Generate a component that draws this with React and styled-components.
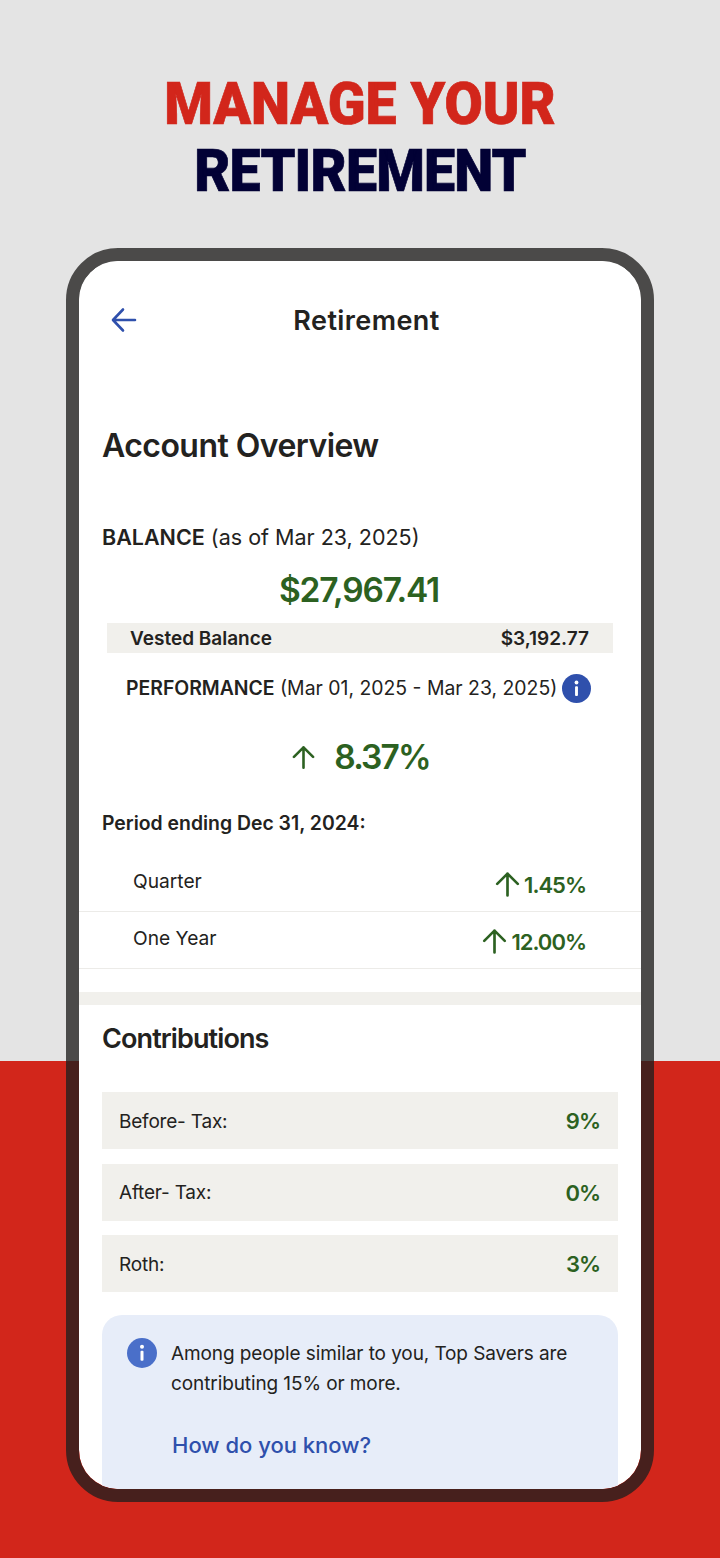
import React from 'react'
import styled, { createGlobalStyle } from 'styled-components'

const Global = createGlobalStyle`
    html, body {
        margin : 0;
        padding : 0;
    }
    body {
        font-family : "Inter", "Liberation Sans", sans-serif;
        color : #232220;
    }
`
const Stage = styled.div`
    width : 720px;
    height : 1558px;
    overflow : hidden;
    background : linear-gradient(to bottom, #e4e4e4 0, #e4e4e4 1061px, #d2261b 1061px);
    padding-top : 71px;
    box-sizing : border-box;
`
const Headline = styled.h1`
    margin : 0;
    height : 177px;
    text-align : center;
    font-family : "Roboto", "Liberation Sans", sans-serif;
    font-weight : 900;
    font-size : 59px;
    line-height : 66.5px;
`
const HeadLine = styled.div`
    color : ${p => p.$color};
    letter-spacing : ${p => p.$tight}px;
    -webkit-text-stroke : 0.7px ${p => p.$color};
    transform : scaleX(0.94);
`
const Phone = styled.div`
    width : 588px;
    height : 1254px;
    margin : 0 auto;
    box-sizing : border-box;
    border : 13px solid rgba(32, 31, 29, 0.78);
    border-radius : 52px;
    overflow : hidden;
    background-clip : padding-box;
`
const Screen = styled.div`
    height : 1228px;
    background : white;
    border-radius : 39px;
    overflow : hidden;
`
const Nav = styled.div`
    display : flex;
    align-items : center;
    height : 118px;
    padding : 0 46px 0 31px;
`
const NavTitle = styled.div`
    flex : 1;
    text-align : center;
    font-size : 27px;
    font-weight : 600;
    letter-spacing : 0.4px;
`
const Section = styled.div`
    padding : 0 23px;
`
const Heading = styled.h2`
    margin : 0;
    padding : 47px 0 0;
    height : 65px;
    line-height : 40px;
    font-size : 32px;
    font-weight : 600;
    letter-spacing : -0.55px;
`
const Label = styled.div`
    height : 40px;
    margin-top : 26px;
    line-height : 40px;
    font-size : 21.5px;
    white-space : nowrap;
    b {
        font-weight : 600;
    }
`
const BigGreen = styled.div`
    height : 46px;
    line-height : 46px;
    margin-top : 10px;
    padding-right : 2px;
    text-align : center;
    font-size : 33.5px;
    font-weight : 600;
    letter-spacing : -1.2px;
    color : #2c6121;
`
const Vested = styled.div`
    display : flex;
    justify-content : space-between;
    align-items : center;
    height : 30px;
    margin : 10px 5px 0;
    padding : 0 24px 0 23px;
    background : #f1f0ec;
    font-size : 19px;
    font-weight : 600;
`
const PerformanceRow = styled.div`
    display : flex;
    align-items : center;
    height : 40px;
    margin-top : 15px;
    padding-left : 24px;
    font-size : 19.4px;
    white-space : nowrap;
    b {
        font-weight : 600;
    }
`
const InfoDot = styled.span`
    display : inline-flex;
    flex : none;
    margin-left : 5px;
    line-height : 0;
`
const Change = styled.div`
    display : flex;
    justify-content : center;
    align-items : center;
    gap : 17px;
    height : 46px;
    margin-top : 26px;
    font-size : 33.5px;
    font-weight : 600;
    letter-spacing : -1.9px;
    color : #2c6121;
`
const Period = styled.div`
    height : 30px;
    line-height : 30px;
    margin-top : 28px;
    font-size : 19.4px;
    font-weight : 600;
`
const PeriodList = styled.div`
    margin-top : 17px;
`
const PeriodRow = styled.div`
    display : flex;
    justify-content : space-between;
    align-items : center;
    height : 56px;
    padding : 0 55px 0 54px;
    border-bottom : 1px solid #ecebe8;
    font-size : 19.2px;
`
const PeriodName = styled.span`
    padding-bottom : 4px;
`
const PeriodValue = styled.span`
    display : flex;
    align-items : center;
    gap : 2px;
    padding-top : 3px;
    font-size : 22px;
    font-weight : 600;
    letter-spacing : -1px;
    color : #2c6121;
`
const Band = styled.div`
    height : 13px;
    margin-top : 23px;
    background : #f1f0ec;
`
const SubHeading = styled.h3`
    margin : 0;
    padding-top : 14px;
    height : 40px;
    line-height : 40px;
    font-size : 27px;
    font-weight : 600;
    letter-spacing : -0.9px;
`
const Rows = styled.div`
    display : flex;
    flex-direction : column;
    gap : 14.5px;
    margin-top : 33px;
`
const ContributionRow = styled.div`
    display : flex;
    justify-content : space-between;
    align-items : center;
    height : 57px;
    padding : 1px 18px 0 17px;
    box-sizing : border-box;
    background : #f1f0ec;
    font-size : 19px;
    letter-spacing : -0.2px;
`
const Percent = styled.span`
    font-size : 22px;
    font-weight : 600;
    letter-spacing : -1px;
    color : #2c6121;
`
const Tip = styled.div`
    display : flex;
    gap : 14px;
    height : 220px;
    margin-top : 23px;
    padding : 23px 20px 0 20px;
    background : #e7edf9;
    border-radius : 20px;
`
const TipBody = styled.div`
    padding-top : 1px;
    font-size : 19px;
    line-height : 30px;
    letter-spacing : -0.1px;
`
const TipLink = styled.div`
    margin : 31px 0 0 1px;
    font-size : 22px;
    font-weight : 500;
    letter-spacing : 0;
    color : #2f50ac;
`

const ArrowUp = ({ size, weight }) => (
    <svg width={size} height={size} viewBox="0 0 24 24" fill="none" stroke="#2c6121" strokeWidth={weight} strokeLinecap="round" strokeLinejoin="round">
        <path d="M12 21V3M3.5 11.5L12 3l8.5 8.5" />
    </svg>
)

const Info = ({ size, color }) => (
    <svg width={size} height={size} viewBox="0 0 30 30">
        <circle cx="15" cy="15" r="15" fill={color} />
        <circle cx="15" cy="8.8" r="2" fill="white" />
        <rect x="13.5" y="12.8" width="3" height="10" rx="1" fill="white" />
    </svg>
)

const contributions = [
    ['Before- Tax:', '9%'],
    ['After- Tax:', '0%'],
    ['Roth:', '3%']
]

function App(){
    return(
        <Stage>
            <Global />
            <Headline>
                <HeadLine $color="#d2261b" $tight={0}>MANAGE YOUR</HeadLine>
                <HeadLine $color="#020135" $tight={-0.85}>RETIREMENT</HeadLine>
            </Headline>
            <Phone>
                <Screen>
                    <Nav>
                        <svg width="28" height="28" viewBox="0 0 28 28" fill="none" stroke="#2f50ac" strokeWidth="2.6" strokeLinecap="round" strokeLinejoin="round">
                            <path d="M25 14H3.5M13 3.5L3 14l10 10.5" />
                        </svg>
                        <NavTitle>Retirement</NavTitle>
                    </Nav>
                    <Section>
                        <Heading>Account Overview</Heading>
                        <Label><b>BALANCE</b> (as of Mar 23, 2025)</Label>
                        <BigGreen>$27,967.41</BigGreen>
                        <Vested>
                            <span>Vested Balance</span>
                            <span>$3,192.77</span>
                        </Vested>
                        <PerformanceRow>
                            <span><b>PERFORMANCE</b> (Mar 01, 2025 - Mar 23, 2025)</span>
                            <InfoDot><Info size={29} color="#2f50ac" /></InfoDot>
                        </PerformanceRow>
                        <Change>
                            <ArrowUp size={27} weight={2.3} />
                            <span>8.37%</span>
                        </Change>
                        <Period>Period ending Dec 31, 2024:</Period>
                    </Section>
                    <PeriodList>
                        <PeriodRow>
                            <PeriodName>Quarter</PeriodName>
                            <PeriodValue><ArrowUp size={29} weight={2.2} />1.45%</PeriodValue>
                        </PeriodRow>
                        <PeriodRow>
                            <PeriodName>One Year</PeriodName>
                            <PeriodValue><ArrowUp size={29} weight={2.2} />12.00%</PeriodValue>
                        </PeriodRow>
                    </PeriodList>
                    <Band />
                    <Section>
                        <SubHeading>Contributions</SubHeading>
                        <Rows>
                            {contributions.map(([name, value]) => (
                                <ContributionRow key={name}>
                                    <span>{name}</span>
                                    <Percent>{value}</Percent>
                                </ContributionRow>
                            ))}
                        </Rows>
                        <Tip>
                            <InfoDot><Info size={30} color="#4a6fc9" /></InfoDot>
                            <TipBody>
                                Among people similar to you, Top Savers are contributing 15% or more.
                                <TipLink>How do you know?</TipLink>
                            </TipBody>
                        </Tip>
                    </Section>
                </Screen>
            </Phone>
        </Stage>
    )
}

export default App
